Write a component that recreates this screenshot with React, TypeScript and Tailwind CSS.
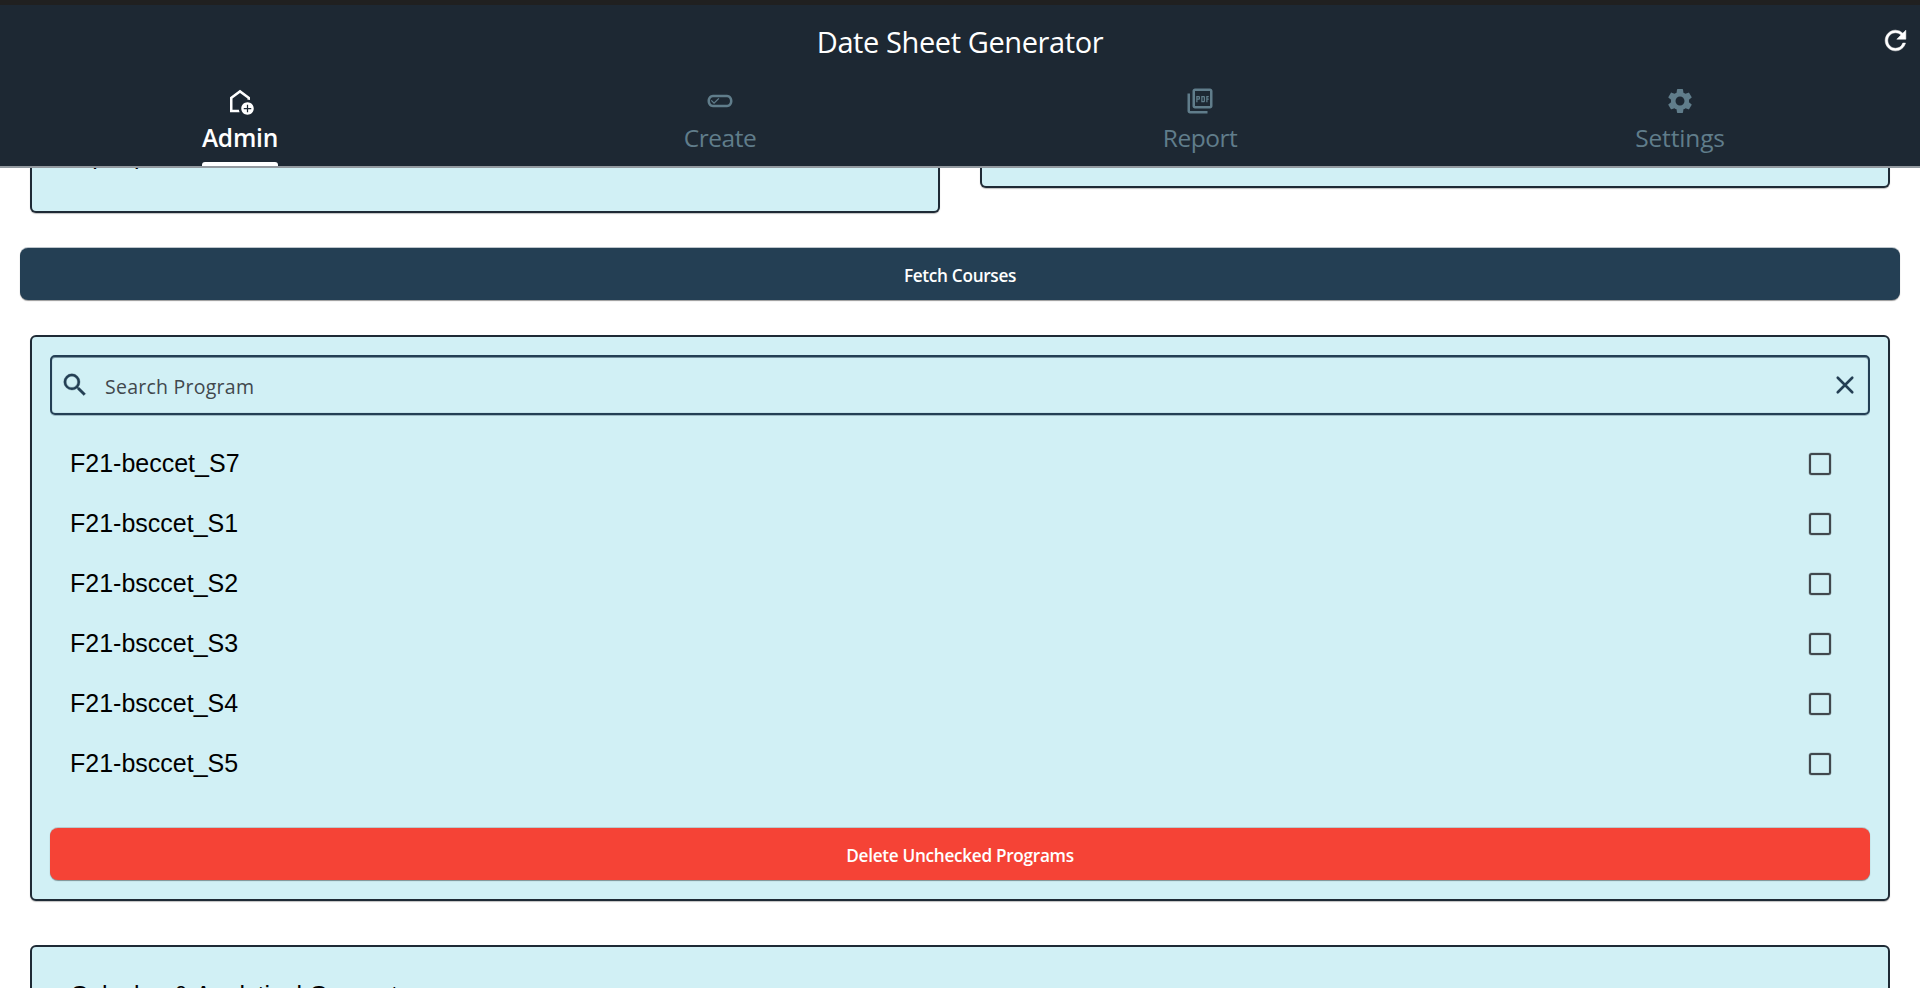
import type { ReactNode } from "react";
import {
  MdOutlineAddHome,
  MdOutlineEditAttributes,
  MdOutlinePictureAsPdf,
  MdSettings,
} from "react-icons/md";

const programs = [
  "F21-beccet_S7",
  "F21-bsccet_S1",
  "F21-bsccet_S2",
  "F21-bsccet_S3",
  "F21-bsccet_S4",
  "F21-bsccet_S5",
];

function Tab({
  icon,
  label,
  active = false,
  className,
}: {
  icon: ReactNode;
  label: string;
  active?: boolean;
  className: string;
}) {
  return (
    <button
      className={`flex flex-1 flex-col items-center text-[24.5px] ${active ? "font-semibold text-white" : "text-[#607d8b]"}`}
    >
      <span className="size-[30px] text-[30px]">{icon}</span>
      <span className={`relative mt-[5px] h-[46px] leading-[34px] ${className}`}>
        {label}
        {active && (
          <span className="absolute inset-x-0 bottom-0 h-[4px] rounded-t-[3px] bg-white" />
        )}
      </span>
    </button>
  );
}

function Header() {
  return (
    <header className="flex h-[168px] shrink-0 flex-col border-t-[5px] border-b-2 border-t-[#202020] border-b-[#939aa0] bg-[#1d2833] font-['Open_Sans',sans-serif]">
      <div className="grid h-[72px] grid-cols-[1fr_auto_1fr] items-center text-white">
        <span />
        <h1 className="pt-[2px] text-[29px] tracking-[-0.4px]">Date Sheet Generator</h1>
        <button aria-label="Refresh" className="mr-[9px] mb-[2px] justify-self-end">
          <svg viewBox="0 0 24 24" className="size-[31px]" fill="currentColor" stroke="currentColor" strokeWidth="0.4">
            <path d="M17.65 6.35A7.958 7.958 0 0 0 12 4c-4.42 0-7.99 3.58-7.99 8s3.57 8 7.99 8c3.73 0 6.84-2.55 7.73-6h-2.08A5.99 5.99 0 0 1 12 18c-3.31 0-6-2.69-6-6s2.69-6 6-6c1.66 0 3.14.69 4.22 1.78L13 11h7V4l-2.35 2.35z" />
          </svg>
        </button>
      </div>
      <nav className="flex h-[89px] pt-[9px]">
        <Tab active className="tracking-[-0.2px]" label="Admin" icon={<MdOutlineAddHome />} />
        <Tab className="tracking-[-0.5px]" label="Create" icon={<MdOutlineEditAttributes />} />
        <Tab className="tracking-[-0.5px]" label="Report" icon={<MdOutlinePictureAsPdf />} />
        <Tab className="tracking-[-0.15px]" label="Settings" icon={<MdSettings />} />
      </nav>
    </header>
  );
}

function Checkbox() {
  return (
    <span className="mr-[37px] size-[22px] rounded-[2.5px] border-2 border-[#41484d] shadow-[0_0_0_0.5px_rgba(65,72,77,0.3),inset_0_0_1px_rgba(65,72,77,0.8)]" />
  );
}

export default function App() {
  return (
    <div className="flex h-[988px] flex-col overflow-hidden bg-white font-['Liberation_Sans',sans-serif] text-[25px] text-black">
      <Header />
      <main className="min-h-0 flex-1 overflow-hidden">
        <div className="flex items-start justify-between px-[30px]">
          <section className="h-[45px] w-[910px] overflow-hidden rounded-b-[6px] border-2 border-t-0 border-[#1e2a35] bg-[#d1f0f5] px-[38px] shadow-[0_1px_1px_rgba(0,0,0,0.25)]">
            <p className="-mt-[43px] h-[60px] leading-[60px]">A people</p>
          </section>
          <section className="h-[20px] w-[910px] rounded-b-[6px] border-2 border-t-0 border-[#1e2a35] bg-[#d1f0f5] shadow-[0_1px_1px_rgba(0,0,0,0.25)]" />
        </div>

        <div className="mt-[35px] px-5">
          <button className="flex h-[52px] w-full items-center justify-center rounded-[8px] bg-[#243f54] pt-[4px] font-['Open_Sans',sans-serif] text-[17.2px] font-semibold tracking-[-0.3px] text-white shadow-[0_1px_1px_rgba(0,0,0,0.4),0_-1px_0_rgba(36,63,84,0.3)]">
            Fetch Courses
          </button>
        </div>

        <section className="mx-[30px] mt-[35px] h-[566px] rounded-[6px] border-2 border-[#1e2a35] bg-[#d1f0f5] px-[18px] pt-[18px] shadow-[0_1px_1px_rgba(0,0,0,0.25)]">
          <div className="flex h-[60px] items-center rounded-[5px] border-2 border-[#243f54] px-2 text-[#243f54] shadow-[0_1px_0_rgba(36,63,84,0.3),inset_0_1px_0_rgba(36,63,84,0.5),inset_0_0_1px_rgba(36,63,84,0.6)]">
            <svg viewBox="0 0 24 24" className="size-[30px]" fill="currentColor" stroke="currentColor" strokeWidth="0.25">
              <path d="M15.5 14h-.79l-.28-.27A6.471 6.471 0 0 0 16 9.5 6.5 6.5 0 1 0 9.5 16c1.61 0 3.09-.59 4.23-1.57l.27.28v.79l5 4.99L20.49 19l-4.99-5zm-6 0C7.01 14 5 11.99 5 9.5S7.01 5 9.5 5 14 7.01 14 9.5 11.99 14 9.5 14z" />
            </svg>
            <span className="ml-[15px] flex-1 pt-[4px] font-['Open_Sans',sans-serif] text-[19.5px] tracking-[0.25px] text-[#41484d]">
              Search Program
            </span>
            <svg viewBox="0 0 24 24" className="size-[30px]" fill="none" stroke="currentColor" strokeWidth="2.1" strokeLinecap="round">
              <path d="M6.2 6.2 17.8 17.8M17.8 6.2 6.2 17.8" />
            </svg>
          </div>

          <ul className="mt-[19px]">
            {programs.map((name) => (
              <li key={name} className="flex h-[60px] items-center justify-between px-5 pr-0.5">
                <span className="pb-[2px] leading-[30px]">{name}</span>
                <Checkbox />
              </li>
            ))}
          </ul>

          <button className="mt-[34px] flex h-[52px] w-full items-center justify-center rounded-[8px] bg-[#f54336] pt-[4px] font-['Open_Sans',sans-serif] text-[17.2px] font-semibold tracking-[-0.3px] text-white shadow-[0_1px_1px_rgba(0,0,0,0.4),0_-1px_0_rgba(120,120,120,0.3)]">
            Delete Unchecked Programs
          </button>
        </section>

        <section className="mx-[30px] mt-[44px] h-[120px] rounded-[6px] border-2 border-[#1e2a35] bg-[#d1f0f5] px-[38px] pt-[18px]">
          <p className="h-[60px] leading-[60px]">Calculus &amp; Analytical Geometry</p>
        </section>
      </main>
    </div>
  );
}
